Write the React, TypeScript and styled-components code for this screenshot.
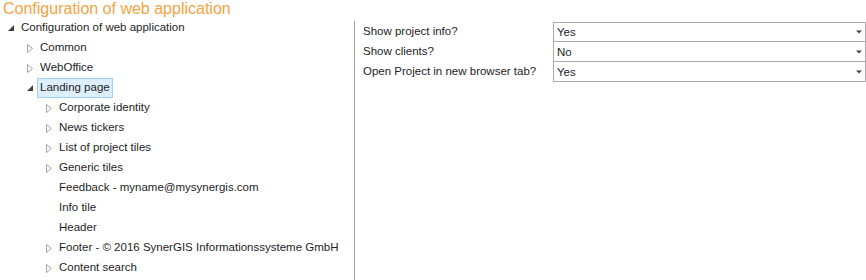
import React from 'react';
import styled, { createGlobalStyle } from 'styled-components';

const FONT = '"Segoe UI", "Liberation Sans", Arial, sans-serif';

const GlobalStyle = createGlobalStyle`
  html, body {
    margin: 0;
    padding: 0;
    background: #ffffff;
    font-family: ${FONT};
    font-size: 11.5px;
    color: #1e1e1e;
  }
`;

const Page = styled.div`
  width: 866px;
  height: 280px;
  overflow: hidden;
  display: flex;
  flex-direction: column;
`;

const Title = styled.h1`
  margin: 0;
  padding: 0 0 0 3px;
  height: 18px;
  line-height: 18px;
  font-size: 16px;
  font-weight: 300;
  color: #f5a343;
  white-space: nowrap;
`;

const Body = styled.div`
  flex: 1;
  display: flex;
  min-height: 0;
`;

const TreePanel = styled.div`
  width: 354px;
  display: flex;
  flex-direction: column;
`;

const Divider = styled.div`
  width: 1px;
  margin-top: 3px;
  background: #a0a0a0;
`;

const Row = styled.div<{ $level: number }>`
  height: 20px;
  display: flex;
  align-items: center;
  padding-left: ${({ $level }) => 6 + $level * 19}px;
  white-space: nowrap;
`;

const Expander = styled.span`
  width: 9px;
  height: 9px;
  margin-right: 6px;
  display: flex;
  align-items: center;
  justify-content: center;
  flex: none;
`;

const Label = styled.span<{ $selected?: boolean }>`
  height: 18px;
  line-height: 17px;
  padding: 0 2px;
  border: 1px solid ${({ $selected }) => ($selected ? '#99d1ff' : 'transparent')};
  background: ${({ $selected }) => ($selected ? '#ddeefd' : 'transparent')};
  margin-left: -3px;
`;

const SettingsPanel = styled.div`
  flex: 1;
  padding: 4px 0 0 8px;
`;

const SettingsGrid = styled.div`
  display: grid;
  grid-template-columns: 190px 313px;
`;

const SettingLabel = styled.div`
  height: 20px;
  line-height: 19px;
  white-space: nowrap;
`;

const Select = styled.div<{ $first?: boolean }>`
  height: 20px;
  box-sizing: border-box;
  border: 1px solid #ababab;
  border-top-width: ${({ $first }) => ($first ? 1 : 0)}px;
  display: flex;
  align-items: center;
  justify-content: space-between;
  padding: 0 3px 0 3px;
  line-height: 18px;
`;

const Arrow = () => (
  <svg width="6" height="4" viewBox="0 0 6 4">
    <path d="M0 0.5 H6 L3 3.5 Z" fill="#444" />
  </svg>
);

const Collapsed = () => (
  <Expander>
    <svg width="6" height="9" viewBox="0 0 6 9">
      <path d="M0.5 0.5 L5.5 4.5 L0.5 8.5 Z" fill="none" stroke="#a6a6a6" strokeWidth="1" />
    </svg>
  </Expander>
);

const Expanded = () => (
  <Expander>
    <svg width="6" height="6" viewBox="0 0 6 6">
      <path d="M6 0 V6 H0 Z" fill="#404040" />
    </svg>
  </Expander>
);

type Node = { label: string; level: number; state: 'open' | 'closed' | 'leaf'; selected?: boolean };

const tree: Node[] = [
  { label: 'Configuration of web application', level: 0, state: 'open' },
  { label: 'Common', level: 1, state: 'closed' },
  { label: 'WebOffice', level: 1, state: 'closed' },
  { label: 'Landing page', level: 1, state: 'open', selected: true },
  { label: 'Corporate identity', level: 2, state: 'closed' },
  { label: 'News tickers', level: 2, state: 'closed' },
  { label: 'List of project tiles', level: 2, state: 'closed' },
  { label: 'Generic tiles', level: 2, state: 'closed' },
  { label: 'Feedback - myname@mysynergis.com', level: 2, state: 'leaf' },
  { label: 'Info tile', level: 2, state: 'leaf' },
  { label: 'Header', level: 2, state: 'leaf' },
  { label: 'Footer - © 2016 SynerGIS Informationssysteme GmbH', level: 2, state: 'closed' },
  { label: 'Content search', level: 2, state: 'closed' },
];

const settings = [
  { label: 'Show project info?', value: 'Yes' },
  { label: 'Show clients?', value: 'No' },
  { label: 'Open Project in new browser tab?', value: 'Yes' },
];

export default function App() {
  return (
    <Page>
      <GlobalStyle />
      <Title>Configuration of web application</Title>
      <Body>
        <TreePanel>
          {tree.map((n) => (
            <Row key={n.label} $level={n.level}>
              {n.state === 'open' ? <Expanded /> : n.state === 'closed' ? <Collapsed /> : <Expander />}
              <Label $selected={n.selected}>{n.label}</Label>
            </Row>
          ))}
        </TreePanel>
        <Divider />
        <SettingsPanel>
          <SettingsGrid>
            {settings.map((s, i) => (
              <React.Fragment key={s.label}>
                <SettingLabel>{s.label}</SettingLabel>
                <Select $first={i === 0}>
                  <span>{s.value}</span>
                  <Arrow />
                </Select>
              </React.Fragment>
            ))}
          </SettingsGrid>
        </SettingsPanel>
      </Body>
    </Page>
  );
}
